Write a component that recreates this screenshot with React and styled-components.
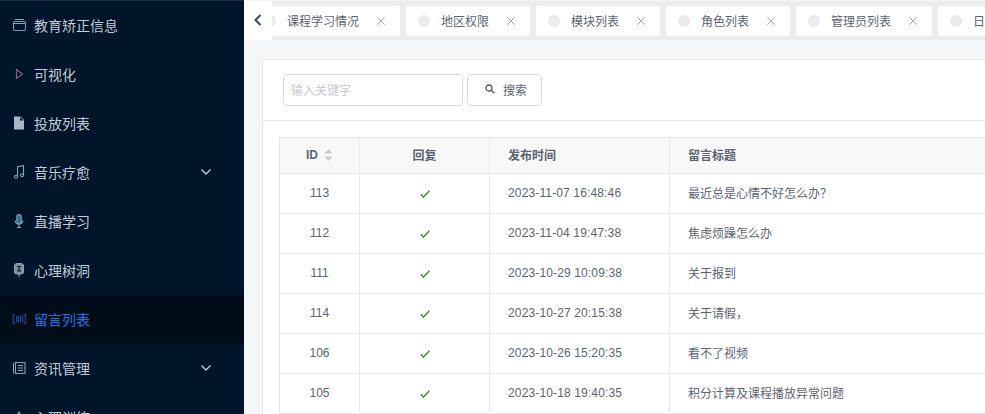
import React from "react";
import styled, { createGlobalStyle } from "styled-components";

const Global = createGlobalStyle`
  html, body { margin: 0; padding: 0; height: 100%; overflow: hidden; }
  body { font-family: "Liberation Sans", "Noto Sans CJK SC", sans-serif; }
  * { box-sizing: border-box; }
`;

const Page = styled.div`display: flex; width: 100vw; height: 100vh; overflow: hidden;`;
const Sidebar = styled.nav`
  flex: none; width: 244px; height: 100%; background: #001529; border-top: 1px solid #1c2b3a; overflow: hidden;
`;
const Item = styled.div`
  display: flex; align-items: center; height: 49px; padding: 0 32px 2px 0; font-size: 14px;
  background: ${p => (p.$active ? "#000c17" : "transparent")};
  color: ${p => (p.$active ? "#1677e6" : "#bfcbd9")};
`;
const IconSlot = styled.span`
  flex: none; width: 34px; height: 16px; padding-left: 11px; display: flex; align-items: center;
`;
const Label = styled.span`flex: 1;`;

const Main = styled.main`flex: 1; min-width: 0; height: 100%; background: #f5f6f8; overflow: hidden;`;
const TabBar = styled.div`
  position: relative; height: 40px; background: #ececec; border-top: 1px solid #f5f5f5;
  display: flex; align-items: flex-start; gap: 6px; padding: 5px 0 0 8px; overflow: hidden;
`;
const Back = styled.div`
  position: absolute; left: 0; top: -1px; width: 28px; height: 40px; background: #fff;
  display: flex; align-items: center; justify-content: center;
`;
const Tab = styled.div`
  flex: none; height: 30px; background: #fff; border-radius: 2px; display: flex; align-items: center;
  padding: 0 15px 1px 12px; font-size: 12px; color: #5c6470;
`;
const Dot = styled.i`flex: none; width: 12px; height: 12px; border-radius: 50%; background: #e8eaec; margin-right: 11px;`;
const Close = styled.svg`flex: none; width: 8px; height: 8px; margin-left: 18px; stroke: #a8a8a8; stroke-width: 1; fill: none;`;

const Card = styled.section`
  width: 1100px; margin: 19px 0 0 18px; background: #fff; border: 1px solid #e8eaec; border-radius: 4px 0 0 0;
`;
const SearchRow = styled.div`
  display: flex; gap: 4px; height: 61px; padding: 14px 0 0 20px; border-bottom: 1px solid #e8eaec;
`;
const Input = styled.div`
  width: 180px; height: 32px; border: 1px solid #dcdee2; border-radius: 4px; padding: 0 0 2px 7px;
  display: flex; align-items: center; font-size: 12px; color: #c5c8ce;
`;
const Button = styled.div`
  width: 75px; height: 32px; border: 1px solid #dcdee2; border-radius: 4px; display: flex; align-items: center;
  padding: 0 0 2px 17px; gap: 8px; font-size: 12px; color: #5c6470;
`;
const TableWrap = styled.div`padding: 16px 0 0 16px;`;
const Table = styled.table`
  width: 1060px; table-layout: fixed; border-collapse: separate; border-spacing: 0;
  border-top: 1px solid #e4e6e9; border-left: 1px solid #e4e6e9; font-size: 12px; color: #5c6470;
`;
const Th = styled.th`
  height: 36px; padding: 0 18px 2px; background: #f8f8f9; font-weight: 700; color: #5c6470;
  border-right: 1px solid #e8eaec; border-bottom: 1px solid #e8eaec;
  text-align: ${p => (p.$center ? "center" : "left")};
`;
const Td = styled.td`
  height: 40px; padding: 0 18px 2px; border-right: 1px solid #e8eaec; border-bottom: 1px solid #e8eaec;
  text-align: ${p => (p.$center ? "center" : "left")};
`;
const Carets = styled.svg`width: 9px; height: 12px; margin-left: 6px; vertical-align: -2px; fill: #c5c8ce;`;
const Check = styled.svg`display: inline-block; width: 10px; height: 8px; margin-top: 2px; vertical-align: middle; stroke: #2e8b0e; stroke-width: 1.3; fill: none;`;
const DateText = styled.span`letter-spacing: 0.14px;`;

const Ico = ({ children, fill }) => (
  <svg width="16" height="16" viewBox="0 0 16 16" fill={fill ? "#a9b6c3" : "none"} stroke={fill ? "none" : "#8ea3b5"} strokeWidth="1.1">{children}</svg>
);

const icons = {
  box: <Ico><rect x="2.5" y="4.5" width="12" height="9" rx="1.5" stroke="#6f9cbe" /><path d="M4 2.5h9M2.5 6.5h12" /></Ico>,
  play: <Ico><path d="M5.5 3.5l6 4.5-6 4.5z" stroke="#86647f" /></Ico>,
  file: <Ico fill><path d="M3 1.5h6.5l3.5 3.5v9.5H3z" /><path d="M9 2v3.5h3.5" fill="#001529" /></Ico>,
  music: <Ico><path d="M6.5 12.5V2.6l6-1v9.4" /><circle cx="5" cy="12.8" r="1.5" stroke="#7fa6c4" /><circle cx="11" cy="11.3" r="1.5" stroke="#7fa6c4" /></Ico>,
  mic: <Ico><rect x="5.8" y="1.5" width="4.4" height="9" rx="2.2" fill="#2e6f8c" stroke="#7fa6bb" /><path d="M4.2 7.5c0 5 7.6 5 7.6 0M8 12v2.5M6 14.5h4" /></Ico>,
  hole: <Ico><rect x="3.5" y="1.5" width="9" height="10.5" rx="3" fill="#7d8e9e" stroke="#8ea3b5" /><path d="M6 4.5h4M6 9h4M8 4.5V9" stroke="#001529" /><path d="M8 12v3" /></Ico>,
  wave: <Ico><g stroke="#1450a8"><path d="M3.8 3.5H2.2v9h1.6M12.5 3.5h1.8v9h-1.8" /><path d="M5.5 5v6M7.5 4.5v7M9.5 4.5v7M11.5 5v6" /></g></Ico>,
  doc: <Ico><path d="M4.5 2.5h9.5v11H4.5z" /><path d="M2.5 3v10.5M7 5.5h5M7 8h5M7 10.5h5" /></Ico>,
  brain: <Ico><path d="M8 3l5 9H3z" /></Ico>,
};

const menu = [
  ["box", "教育矫正信息"], ["play", "可视化"], ["file", "投放列表"], ["music", "音乐疗愈", 1],
  ["mic", "直播学习"], ["hole", "心理树洞"], ["wave", "留言列表", 0, 1], ["doc", "资讯管理", 1], ["brain", "心理训练"],
];
const tabs = ["课程学习情况", "地区权限", "模块列表", "角色列表", "管理员列表", "日志列表"];
const rows = [
  [113, "2023-11-07 16:48:46", "最近总是心情不好怎么办？"],
  [112, "2023-11-04 19:47:38", "焦虑烦躁怎么办"],
  [111, "2023-10-29 10:09:38", "关于报到"],
  [114, "2023-10-27 20:15:38", "关于请假，"],
  [106, "2023-10-26 15:20:35", "看不了视频"],
  [105, "2023-10-18 19:40:35", "积分计算及课程播放异常问题"],
];

export default function App() {
  return (
    <Page>
      <Global />
      <Sidebar>
        {menu.map(([icon, text, arrow, active]) => (
          <Item key={text} $active={active}>
            <IconSlot>{icons[icon]}</IconSlot>
            <Label>{text}</Label>
            {arrow ? (
              <svg width="12" height="8" viewBox="0 0 12 8" fill="none" stroke="#bfcbd9" strokeWidth="1.4"><path d="M1.5 1.5L6 6l4.5-4.5" /></svg>
            ) : null}
          </Item>
        ))}
      </Sidebar>
      <Main>
        <TabBar>
          {tabs.map(t => (
            <Tab key={t}>
              <Dot />
              {t}
              <Close viewBox="0 0 8 8"><path d="M.3.3l7.4 7.4M7.7.3L.3 7.7" /></Close>
            </Tab>
          ))}
          <Back>
            <svg width="8" height="12" viewBox="0 0 8 12" fill="none" stroke="#3b4656" strokeWidth="2"><path d="M6.5 1L1.5 6l5 5" /></svg>
          </Back>
        </TabBar>
        <Card>
          <SearchRow>
            <Input>输入关键字</Input>
            <Button>
              <svg width="10" height="10" viewBox="0 0 10 10" fill="none" stroke="#515a6e" strokeWidth="1.3"><circle cx="4" cy="4" r="3" /><path d="M6.2 6.2L9.3 9.3" /></svg>
              搜索
            </Button>
          </SearchRow>
          <TableWrap>
            <Table>
              <colgroup>
                <col style={{ width: 80 }} />
                <col style={{ width: 130 }} />
                <col style={{ width: 180 }} />
                <col />
              </colgroup>
              <thead>
                <tr>
                  <Th $center>
                    ID
                    <Carets viewBox="0 0 9 12"><path d="M4.5 0L8.5 4.5H.5zM4.5 12L.5 7.5h8z" /></Carets>
                  </Th>
                  <Th $center>回复</Th>
                  <Th>发布时间</Th>
                  <Th>留言标题</Th>
                </tr>
              </thead>
              <tbody>
                {rows.map(([id, time, title]) => (
                  <tr key={id}>
                    <Td $center>{id}</Td>
                    <Td $center>
                      <Check viewBox="0 0 10 8"><path d="M.7 4.4l2.7 2.7L9.4.8" /></Check>
                    </Td>
                    <Td><DateText>{time}</DateText></Td>
                    <Td>{title}</Td>
                  </tr>
                ))}
              </tbody>
            </Table>
          </TableWrap>
        </Card>
      </Main>
    </Page>
  );
}
